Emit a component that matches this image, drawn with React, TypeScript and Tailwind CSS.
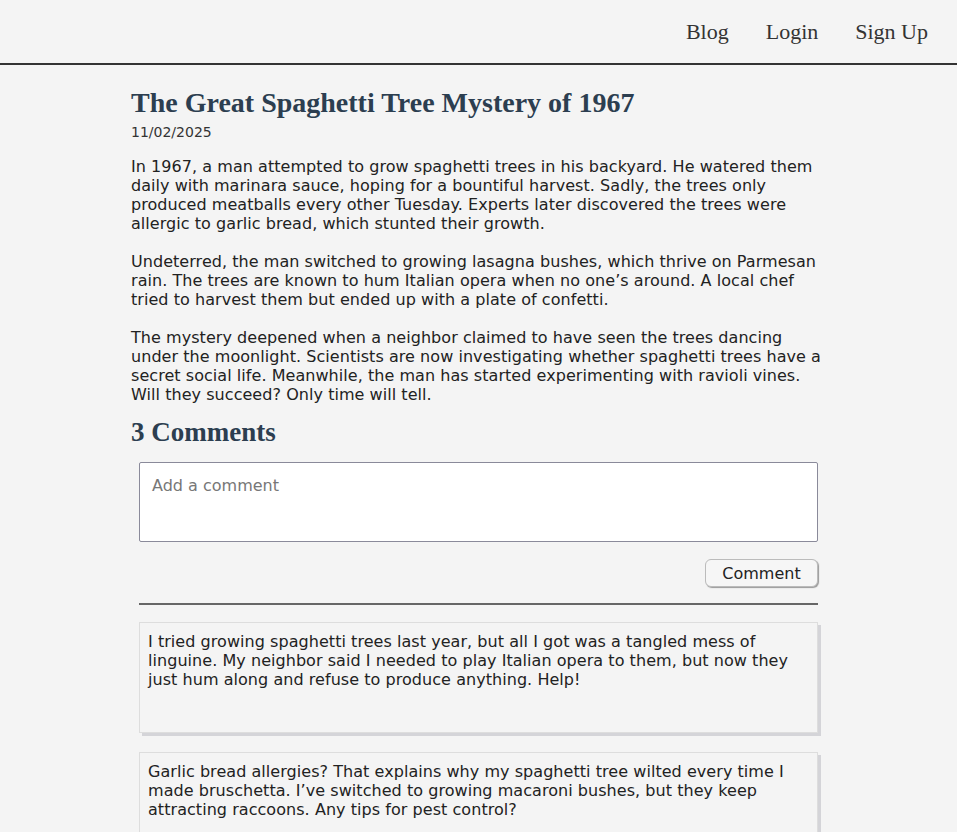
import React from "react";

const serif = "font-['Liberation_Serif',Georgia,serif]";
const sans = "font-['DejaVu_Sans',Verdana,sans-serif]";

const comments = [
  "I tried growing spaghetti trees last year, but all I got was a tangled mess of linguine. My neighbor said I needed to play Italian opera to them, but now they just hum along and refuse to produce anything. Help!",
  "Garlic bread allergies? That explains why my spaghetti tree wilted every time I made bruschetta. I’ve switched to growing macaroni bushes, but they keep attracting raccoons. Any tips for pest control?",
  "My spaghetti tree only produces angel hair pasta on full moons. Is that normal?",
];

export default function App() {
  return (
    <div className={`min-h-screen bg-[#f4f4f4] text-[#222] ${sans}`}>
      <header className="h-[65px] border-b-2 border-[#333] flex items-center justify-end pr-[29px]">
        <nav className={`flex gap-[37px] text-[22px] text-[#333] ${serif}`}>
          <a>Blog</a>
          <a>Login</a>
          <a>Sign Up</a>
        </nav>
      </header>
      <main className="w-[695px] mx-auto pt-[22px]">
        <h1 className={`text-[28px] font-bold text-[#2c3e50] leading-[32px] ${serif}`}>
          The Great Spaghetti Tree Mystery of 1967
        </h1>
        <div className="text-[14px] text-[#333] mt-[4px] leading-[18px]">11/02/2025</div>
        <div className="mt-[16px] text-[16px] leading-[19px] text-[#222] tracking-[0.05px]">
          <p className="mb-[19px]">
            In 1967, a man attempted to grow spaghetti trees in his backyard. He watered them daily with marinara sauce, hoping for a bountiful harvest. Sadly, the trees only produced meatballs every other Tuesday. Experts later discovered the trees were allergic to garlic bread, which stunted their growth.
          </p>
          <p className="mb-[19px]">
            Undeterred, the man switched to growing lasagna bushes, which thrive on Parmesan rain. The trees are known to hum Italian opera when no one’s around. A local chef tried to harvest them but ended up with a plate of confetti.
          </p>
          <p>
            The mystery deepened when a neighbor claimed to have seen the trees dancing under the moonlight. Scientists are now investigating whether spaghetti trees have a secret social life. Meanwhile, the man has started experimenting with ravioli vines. Will they succeed? Only time will tell.
          </p>
        </div>
        <h2 className={`mt-[13px] text-[27px] font-bold text-[#2c3e50] leading-[30px] ${serif}`}>
          3 Comments
        </h2>
        <section className="mx-[8px] mt-[15px]">
          <textarea
            placeholder="Add a comment"
            className={`block w-full h-[80px] bg-white border border-[#8a8a9a] rounded-[2px] px-[12px] pt-[13px] pb-[11px] text-[16px] leading-[19px] resize-none placeholder:text-[#777] ${sans}`}
          />
          <div className="flex justify-end mt-[17px]">
            <button className={`h-[28px] w-[113px] border border-[#bbb] rounded-[6px] bg-[#f6f6f6] text-[16px] leading-[19px] pt-[1px] text-[#222] shadow-[1px_1px_1px_#999] ${sans}`}>
              Comment
            </button>
          </div>
          <div className="mt-[16px] h-[2px] bg-[#666]" />
          <div className="mt-[17px] flex flex-col gap-[19px]">
            {comments.map((c, i) => (
              <div
                key={i}
                className="min-h-[111px] border border-[#ddd] bg-[#f4f4f4] px-[8px] pt-[9px] pb-[8px] text-[16px] leading-[19px] tracking-[0.05px] shadow-[3px_3px_0_#d4d4d8]"
              >
                {c}
              </div>
            ))}
          </div>
        </section>
      </main>
    </div>
  );
}
